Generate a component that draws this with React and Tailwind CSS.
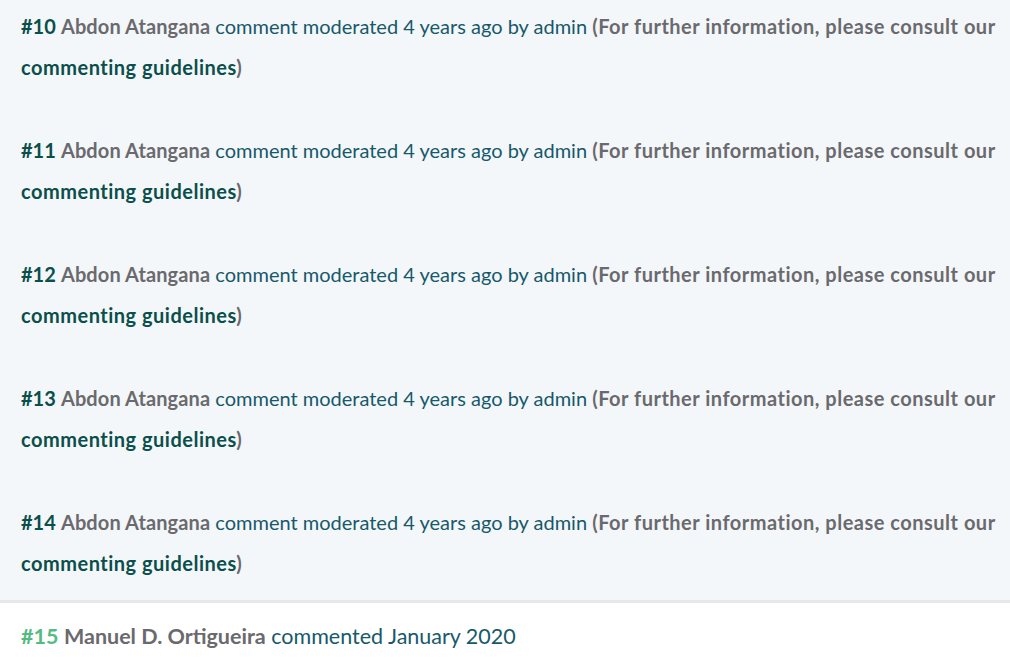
import React from 'react';

const moderated = [10, 11, 12, 13, 14];

const ModeratedComment = ({ n }) => (
  <p className="text-[20px] leading-[41px] text-[#17596a]">
    <span className="font-bold text-[#0b4f4b]">#{n}</span>{' '}
    <span className="font-bold tracking-[0.1px] text-[#6a6a6e]">Abdon Atangana</span> comment moderated 4 years ago by admin{' '}
    <span className="font-bold tracking-[0.5px] text-[#6a6a6e]">
      (For further information, please consult our{' '}
      <a href="#" className="text-[#0b4f4b]">
        commenting guidelines
      </a>
      )
    </span>
  </p>
);

export default function App() {
  return (
    <div className="w-[1010px] h-[672px] overflow-hidden bg-white" style={{ fontFamily: 'Lato, "Noto Sans", sans-serif' }}>
      <div className="flex flex-col gap-[42px] bg-[#f4f7fa] pl-[21px] pr-[8px] pt-[6px] pb-[16px] border-b-[3px] border-[#e5e9ec]">
        {moderated.map((n) => (
          <ModeratedComment key={n} n={n} />
        ))}
      </div>
      <div className="pl-[21px] pt-[13px]">
        <p className="text-[21.5px] leading-[41px] text-[#17596a]">
          <span className="font-bold text-[#55bb82]">#15</span>{' '}
          <span className="font-bold text-[#6a6a6e]">Manuel D. Ortigueira</span> commented January 2020
        </p>
      </div>
    </div>
  );
}
